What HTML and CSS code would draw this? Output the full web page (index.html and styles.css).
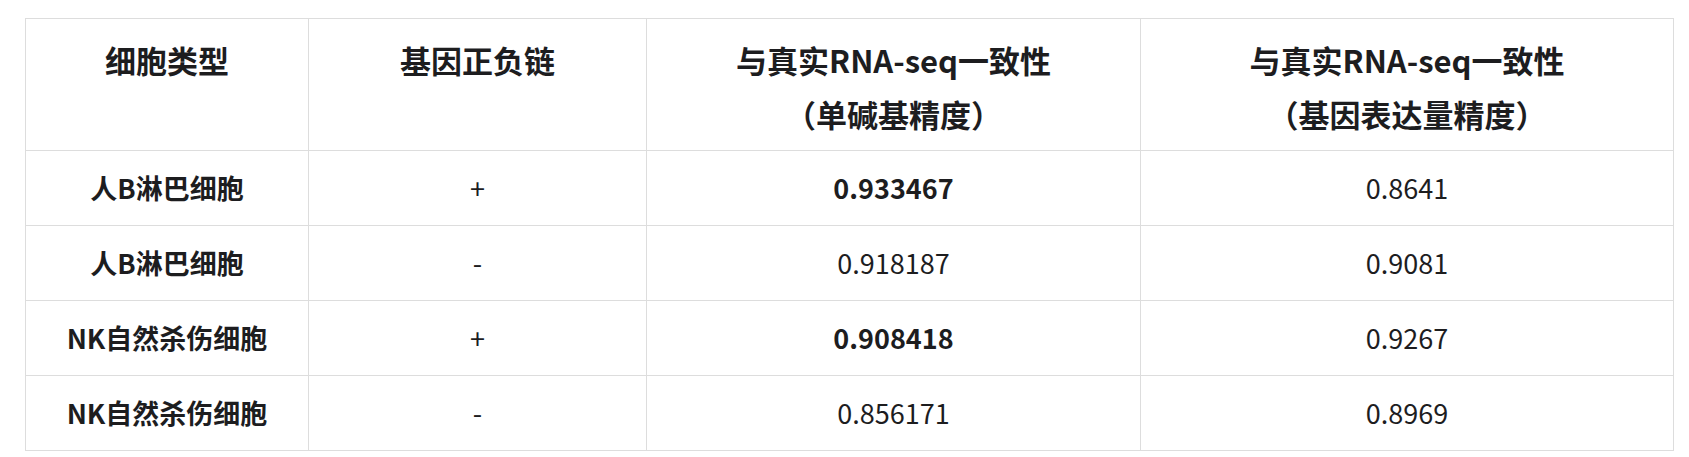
FILE: index.html
```html
<!DOCTYPE html>
<html lang="zh-CN">
<head>
<meta charset="utf-8">
<title>细胞类型一致性</title>
<link rel="stylesheet" href="styles.css">
</head>
<body>
<div class="page">
<table class="grid">
  <colgroup>
    <col class="c1"><col class="c2"><col class="c3"><col class="c4">
  </colgroup>
  <thead>
    <tr>
      <th>细胞类型</th>
      <th>基因正负链</th>
      <th>与真实RNA-seq一致性<br>（单碱基精度）</th>
      <th>与真实RNA-seq一致性<br>（基因表达量精度）</th>
    </tr>
  </thead>
  <tbody>
    <tr><td class="name">人B淋巴细胞</td><td>+</td><td class="strong">0.933467</td><td>0.8641</td></tr>
    <tr><td class="name">人B淋巴细胞</td><td>-</td><td>0.918187</td><td>0.9081</td></tr>
    <tr><td class="name">NK自然杀伤细胞</td><td>+</td><td class="strong">0.908418</td><td>0.9267</td></tr>
    <tr><td class="name">NK自然杀伤细胞</td><td>-</td><td>0.856171</td><td>0.8969</td></tr>
  </tbody>
</table>
</div>
</body>
</html>
```
FILE: styles.css
```css
html, body {
  margin: 0;
  padding: 0;
  background: #ffffff;
}
.page {
  padding: 18px 0 0 25px;
  font-family: "Noto Sans CJK SC", "Noto Sans", sans-serif;
  color: #1d1d1f;
}
.grid {
  border-collapse: collapse;
  table-layout: fixed;
  width: 1648px;
}
.c1 { width: 283px; }
.c2 { width: 338px; }
.c3 { width: 494px; }
.c4 { width: 533px; }
.grid th, .grid td {
  border: 1px solid #dddddd;
  text-align: center;
  line-height: 54px;
}
.grid th {
  font-size: 31px;
  font-weight: 700;
  vertical-align: top;
  padding: 14px 8px 9px;
}
.grid td {
  font-size: 27px;
  font-weight: 400;
  vertical-align: middle;
  padding: 10px 8px;
}
.grid td.name, .grid td.strong {
  font-weight: 700;
}
```
